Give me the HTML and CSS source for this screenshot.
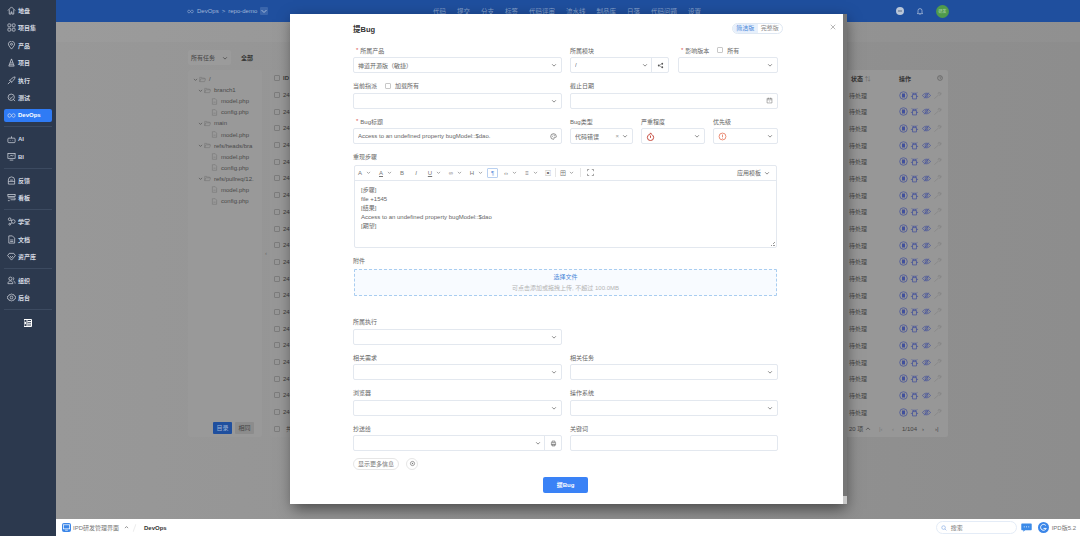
FILE: index.html
```html
<!DOCTYPE html>
<html lang="zh-CN">
<head>
  <meta charset="UTF-8">
  <title>提Bug</title>
  <link rel="stylesheet" href="styles.css">
</head>
<body>
  <svg class="defs" width="0" height="0">
    <symbol id="chev" viewBox="0 0 8 8"><path d="M1.500 3l2.500 2.500L6.500 3" fill="none" stroke="currentColor" stroke-width="1"/></symbol>
    <symbol id="folder" viewBox="0 0 10 10"><path d="M1 8V2h3l1 1h3v1M1 8l1.500-4H9.500L8 8z" fill="none" stroke="currentColor" stroke-width=".7"/></symbol>
    <symbol id="file" viewBox="0 0 10 10"><path d="M2 1h4l2 2v6H2zM3.500 6h3" fill="none" stroke="currentColor" stroke-width=".7"/></symbol>
    <symbol id="run" viewBox="0 0 10 10"><circle cx="5" cy="5" r="4.200" fill="none" stroke="currentColor" stroke-width=".8"/><path d="M3.300 2.800h3.400v4.400H3.300z" fill="currentColor"/></symbol>
    <symbol id="bug" viewBox="0 0 10 10"><path d="M2.800 4h4.400v4.800H2.800zM3.500 4V2.500h3V4M2.800 6H1M9 6H7.200M2 1.500l1.500 1.500M8 1.500L6.500 3" fill="none" stroke="currentColor" stroke-width=".8"/></symbol>
    <symbol id="eye" viewBox="0 0 10 10"><path d="M.5 5C3 1.600 7 1.600 9.500 5 7 8.400 3 8.400.5 5z" fill="none" stroke="currentColor" stroke-width=".8"/><circle cx="5" cy="5" r="1.500" fill="none" stroke="currentColor" stroke-width=".8"/><path d="M2.500 8.200l5-6.400" stroke="currentColor" stroke-width=".7"/></symbol>
    <symbol id="tool" viewBox="0 0 10 10"><path d="M1.500 8.500L6 4.500M5.500 3.500a2 2 0 0 1 2.500-2L6.800 2.800l.8.800L9 2.300a2 2 0 0 1-2.500 2.400" fill="none" stroke="currentColor" stroke-width=".8"/></symbol>
  </svg>

  <div class="app">
    <aside class="sidebar">
      <div class="nav-group">
        <a class="nav-item"><svg viewBox="0 0 10 10"><path d="M1 5l4-4 4 4M2.500 4v5h2V6.500h1V9h2V4"/></svg>地盘</a>
        <a class="nav-item"><svg viewBox="0 0 10 10"><rect x="1" y="1" width="3.200" height="3.200" rx=".8"/><rect x="5.800" y="1" width="3.200" height="3.200" rx=".8"/><rect x="1" y="5.800" width="3.200" height="3.200" rx=".8"/><rect x="5.800" y="5.800" width="3.200" height="3.200" rx=".8"/></svg>项目集</a>
        <a class="nav-item"><svg viewBox="0 0 10 10"><path d="M5 9L2.200 5.400a3.400 3.400 0 1 1 5.600 0z"/><circle cx="5" cy="3.600" r="1.100"/></svg>产品</a>
        <a class="nav-item"><svg viewBox="0 0 10 10"><path d="M5 1L2 9h6zM3.500 5.500h3M2.800 7.500h4.400"/></svg>项目</a>
        <a class="nav-item"><svg viewBox="0 0 10 10"><path d="M1 9l3-3M9 1C6.500 1.300 4.500 3 3.500 5.200l1.300 1.300C7 5.500 8.700 3.500 9 1zM2.500 5l1-.5M5 7.500l.5-1"/></svg>执行</a>
        <a class="nav-item"><svg viewBox="0 0 10 10"><circle cx="4.700" cy="4.700" r="3.500"/><path d="M7.300 7.300L9 9M3 5l1.300 1.200L6.400 3.800"/></svg>测试</a>
        <a class="nav-item active"><svg viewBox="0 0 10 10"><path d="M3 3a2 2 0 1 0 0 4c1.500 0 2.500-4 4-4a2 2 0 1 1 0 4C5.500 7 4.500 3 3 3z"/></svg>DevOps</a>
      </div>
      <div class="nav-group">
        <a class="nav-item"><svg viewBox="0 0 10 10"><rect x="1" y="3.500" width="8" height="5" rx="1"/><path d="M5 3.500V1.500M3.200 6h.6M6.200 6h.6"/></svg>AI</a>
        <a class="nav-item"><svg viewBox="0 0 10 10"><rect x="1" y="1.500" width="8" height="5.500"/><path d="M3 9h4M3 5l1.500-1.500L6 4.500 7.500 3"/></svg>BI</a>
      </div>
      <div class="nav-group">
        <a class="nav-item"><svg viewBox="0 0 10 10"><path d="M1.500 4.500a3.500 3.500 0 0 1 7 0V9h-7zM1.500 6h7M3.500 4.500h3"/></svg>反馈</a>
        <a class="nav-item"><svg viewBox="0 0 10 10"><rect x="1" y="1.500" width="8" height="2.500"/><path d="M1 5.500h8v2H4M1 8.500h2"/></svg>看板</a>
      </div>
      <div class="nav-group">
        <a class="nav-item"><svg viewBox="0 0 10 10"><circle cx="3" cy="2.500" r="1.500"/><circle cx="7" cy="5" r="2"/><circle cx="3" cy="8" r="1"/><path d="M4 3.500l1.300.6M4 7.500l1.500-1"/></svg>学堂</a>
        <a class="nav-item"><svg viewBox="0 0 10 10"><path d="M2 1h4l2.500 2.500V9H2zM3.500 5.500h3.500M3.500 7.200h3.500"/></svg>文档</a>
        <a class="nav-item"><svg viewBox="0 0 10 10"><path d="M2.500 1.500h5L9.300 4 5 9 .7 4zM3.500 4.500L5 6.500l1.500-2"/></svg>资产库</a>
      </div>
      <div class="nav-group">
        <a class="nav-item"><svg viewBox="0 0 10 10"><circle cx="3.800" cy="3" r="1.800"/><path d="M1 8.500c0-4 5.500-4 5.500 0zM6.500 1.300a1.800 1.800 0 0 1 0 3.300M7.300 5.500C8.500 6 9 7 9 8.500"/></svg>组织</a>
        <a class="nav-item"><svg viewBox="0 0 10 10"><path d="M5 .8l1 1.200 1.600-.2.600 1.500 1.500.6-.2 1.100.2 1-1.500.6-.6 1.500L6 8l-1 1.200L4 8l-1.600.2-.6-1.500-1.500-.6.200-1-.2-1.100 1.500-.6.600-1.500L4 2z"/><circle cx="5" cy="5" r="1.500"/></svg>后台</a>
      </div>
      <div class="nav-toggle"><svg viewBox="0 0 8 8"><path d="M0 .5h7.500v7H0zM3 .5v7" fill="none" stroke="#fff"/><path d="M3.500 2h3.500v1H3.500zM3.500 3.800h3.500v1H3.500zM3.500 5.600h3.500v1H3.500zM0 4l2-1.500v3z" fill="#fff"/></svg></div>
    </aside>

    <div class="main">
      <header class="topbar">
        <div class="crumb">
          <svg class="crumb-icon" viewBox="0 0 10 10"><path d="M3 3a2 2 0 1 0 0 4c1.500 0 2.500-4 4-4a2 2 0 1 1 0 4C5.500 7 4.500 3 3 3z"/></svg>
          <span>DevOps</span><span class="crumb-sep">&gt;</span><span>repo-demo</span>
          <span class="crumb-btn"><svg viewBox="0 0 8 8"><use href="#chev"/></svg></span>
        </div>
        <nav class="topnav">
          <a>代码</a><a>提交</a><a>分支</a><a>标签</a><a>代码评审</a><a>流水线</a><a>制品库</a><a>日落</a><a>代码问题</a><a>设置</a>
        </nav>
        <div class="top-actions">
          <svg class="top-plus" viewBox="0 0 8 8"><circle cx="4" cy="4" r="4" fill="#b9c6d8"/><path d="M2 4h4" stroke="#5a6b84"/></svg>
          <svg class="top-bell" viewBox="0 0 10 10"><path d="M2.500 7.500V4.500a2.500 2.500 0 0 1 5 0v3l.8.800H1.700zM4.300 9.200h1.400"/></svg>
          <span class="avatar">研发</span>
        </div>
      </header>
      <div class="subbar"></div>

      <div class="content">
        <div class="filters">
          <span class="filter-select">所有任务<svg viewBox="0 0 8 8"><use href="#chev"/></svg></span>
          <b class="filter-all">全部</b>
        </div>
        <div class="panels">
          <section class="tree-panel">
            <div class="tree-row l0"><svg class="chev" viewBox="0 0 8 8"><use href="#chev"/></svg><svg class="ti" viewBox="0 0 10 10"><use href="#folder"/></svg>/</div>
            <div class="tree-row l1"><svg class="chev" viewBox="0 0 8 8"><use href="#chev"/></svg><svg class="ti" viewBox="0 0 10 10"><use href="#folder"/></svg>branch1</div>
            <div class="tree-row l2"><svg class="ti" viewBox="0 0 10 10"><use href="#file"/></svg>model.php</div>
            <div class="tree-row l2"><svg class="ti" viewBox="0 0 10 10"><use href="#file"/></svg>config.php</div>
            <div class="tree-row l1"><svg class="chev" viewBox="0 0 8 8"><use href="#chev"/></svg><svg class="ti" viewBox="0 0 10 10"><use href="#folder"/></svg>main</div>
            <div class="tree-row l2"><svg class="ti" viewBox="0 0 10 10"><use href="#file"/></svg>model.php</div>
            <div class="tree-row l1"><svg class="chev" viewBox="0 0 8 8"><use href="#chev"/></svg><svg class="ti" viewBox="0 0 10 10"><use href="#folder"/></svg>refs/heads/bra</div>
            <div class="tree-row l2"><svg class="ti" viewBox="0 0 10 10"><use href="#file"/></svg>model.php</div>
            <div class="tree-row l2"><svg class="ti" viewBox="0 0 10 10"><use href="#file"/></svg>config.php</div>
            <div class="tree-row l1"><svg class="chev" viewBox="0 0 8 8"><use href="#chev"/></svg><svg class="ti" viewBox="0 0 10 10"><use href="#folder"/></svg>refs/pullreq/12.</div>
            <div class="tree-row l2"><svg class="ti" viewBox="0 0 10 10"><use href="#file"/></svg>model.php</div>
            <div class="tree-row l2"><svg class="ti" viewBox="0 0 10 10"><use href="#file"/></svg>config.php</div>
            <div class="tree-btns"><span class="btn-dir">目录</span><span class="btn-sub">相同</span></div>
          </section>
          <span class="panel-handle">‹</span>
          <section class="table-panel">
            <div class="t-head"><i class="box"></i><b class="t-id">ID</b><b class="t-status">状态 <span class="sort">⇅</span></b><b class="t-ops">操作</b><svg class="t-help" viewBox="0 0 10 10"><circle cx="5" cy="5" r="4" fill="none" stroke="currentColor"/><path d="M3.500 4a1.500 1.500 0 1 1 1.500 2v.6" fill="none" stroke="currentColor" stroke-width=".8"/></svg></div>
            <div class="t-row"><i class="box"></i><span class="t-id">2487</span><span class="t-status">待处理</span><span class="t-acts"><svg viewBox="0 0 10 10"><use href="#run"/></svg><svg viewBox="0 0 10 10"><use href="#bug"/></svg><svg viewBox="0 0 10 10"><use href="#eye"/></svg><svg class="off" viewBox="0 0 10 10"><use href="#tool"/></svg></span></div>
            <div class="t-row"><i class="box"></i><span class="t-id">2486</span><span class="t-status">待处理</span><span class="t-acts"><svg viewBox="0 0 10 10"><use href="#run"/></svg><svg viewBox="0 0 10 10"><use href="#bug"/></svg><svg viewBox="0 0 10 10"><use href="#eye"/></svg><svg class="off" viewBox="0 0 10 10"><use href="#tool"/></svg></span></div>
            <div class="t-row"><i class="box"></i><span class="t-id">2485</span><span class="t-status">待处理</span><span class="t-acts"><svg viewBox="0 0 10 10"><use href="#run"/></svg><svg viewBox="0 0 10 10"><use href="#bug"/></svg><svg viewBox="0 0 10 10"><use href="#eye"/></svg><svg class="off" viewBox="0 0 10 10"><use href="#tool"/></svg></span></div>
            <div class="t-row"><i class="box"></i><span class="t-id">2484</span><span class="t-status">待处理</span><span class="t-acts"><svg viewBox="0 0 10 10"><use href="#run"/></svg><svg viewBox="0 0 10 10"><use href="#bug"/></svg><svg viewBox="0 0 10 10"><use href="#eye"/></svg><svg class="off" viewBox="0 0 10 10"><use href="#tool"/></svg></span></div>
            <div class="t-row"><i class="box"></i><span class="t-id">2483</span><span class="t-status">待处理</span><span class="t-acts"><svg viewBox="0 0 10 10"><use href="#run"/></svg><svg viewBox="0 0 10 10"><use href="#bug"/></svg><svg viewBox="0 0 10 10"><use href="#eye"/></svg><svg class="off" viewBox="0 0 10 10"><use href="#tool"/></svg></span></div>
            <div class="t-row"><i class="box"></i><span class="t-id">2482</span><span class="t-status">待处理</span><span class="t-acts"><svg viewBox="0 0 10 10"><use href="#run"/></svg><svg viewBox="0 0 10 10"><use href="#bug"/></svg><svg viewBox="0 0 10 10"><use href="#eye"/></svg><svg class="off" viewBox="0 0 10 10"><use href="#tool"/></svg></span></div>
            <div class="t-row"><i class="box"></i><span class="t-id">2481</span><span class="t-status">待处理</span><span class="t-acts"><svg viewBox="0 0 10 10"><use href="#run"/></svg><svg viewBox="0 0 10 10"><use href="#bug"/></svg><svg viewBox="0 0 10 10"><use href="#eye"/></svg><svg class="off" viewBox="0 0 10 10"><use href="#tool"/></svg></span></div>
            <div class="t-row"><i class="box"></i><span class="t-id">2480</span><span class="t-status">待处理</span><span class="t-acts"><svg viewBox="0 0 10 10"><use href="#run"/></svg><svg viewBox="0 0 10 10"><use href="#bug"/></svg><svg viewBox="0 0 10 10"><use href="#eye"/></svg><svg class="off" viewBox="0 0 10 10"><use href="#tool"/></svg></span></div>
            <div class="t-row"><i class="box"></i><span class="t-id">2479</span><span class="t-status">待处理</span><span class="t-acts"><svg viewBox="0 0 10 10"><use href="#run"/></svg><svg viewBox="0 0 10 10"><use href="#bug"/></svg><svg viewBox="0 0 10 10"><use href="#eye"/></svg><svg class="off" viewBox="0 0 10 10"><use href="#tool"/></svg></span></div>
            <div class="t-row"><i class="box"></i><span class="t-id">2478</span><span class="t-status">待处理</span><span class="t-acts"><svg viewBox="0 0 10 10"><use href="#run"/></svg><svg viewBox="0 0 10 10"><use href="#bug"/></svg><svg viewBox="0 0 10 10"><use href="#eye"/></svg><svg class="off" viewBox="0 0 10 10"><use href="#tool"/></svg></span></div>
            <div class="t-row"><i class="box"></i><span class="t-id">2477</span><span class="t-status">待处理</span><span class="t-acts"><svg viewBox="0 0 10 10"><use href="#run"/></svg><svg viewBox="0 0 10 10"><use href="#bug"/></svg><svg viewBox="0 0 10 10"><use href="#eye"/></svg><svg class="off" viewBox="0 0 10 10"><use href="#tool"/></svg></span></div>
            <div class="t-row"><i class="box"></i><span class="t-id">2476</span><span class="t-status">待处理</span><span class="t-acts"><svg viewBox="0 0 10 10"><use href="#run"/></svg><svg viewBox="0 0 10 10"><use href="#bug"/></svg><svg viewBox="0 0 10 10"><use href="#eye"/></svg><svg class="off" viewBox="0 0 10 10"><use href="#tool"/></svg></span></div>
            <div class="t-row"><i class="box"></i><span class="t-id">2475</span><span class="t-status">待处理</span><span class="t-acts"><svg viewBox="0 0 10 10"><use href="#run"/></svg><svg viewBox="0 0 10 10"><use href="#bug"/></svg><svg viewBox="0 0 10 10"><use href="#eye"/></svg><svg class="off" viewBox="0 0 10 10"><use href="#tool"/></svg></span></div>
            <div class="t-row"><i class="box"></i><span class="t-id">2474</span><span class="t-status">待处理</span><span class="t-acts"><svg viewBox="0 0 10 10"><use href="#run"/></svg><svg viewBox="0 0 10 10"><use href="#bug"/></svg><svg viewBox="0 0 10 10"><use href="#eye"/></svg><svg class="off" viewBox="0 0 10 10"><use href="#tool"/></svg></span></div>
            <div class="t-row"><i class="box"></i><span class="t-id">2473</span><span class="t-status">待处理</span><span class="t-acts"><svg viewBox="0 0 10 10"><use href="#run"/></svg><svg viewBox="0 0 10 10"><use href="#bug"/></svg><svg viewBox="0 0 10 10"><use href="#eye"/></svg><svg class="off" viewBox="0 0 10 10"><use href="#tool"/></svg></span></div>
            <div class="t-row"><i class="box"></i><span class="t-id">2472</span><span class="t-status">待处理</span><span class="t-acts"><svg viewBox="0 0 10 10"><use href="#run"/></svg><svg viewBox="0 0 10 10"><use href="#bug"/></svg><svg viewBox="0 0 10 10"><use href="#eye"/></svg><svg class="off" viewBox="0 0 10 10"><use href="#tool"/></svg></span></div>
            <div class="t-row"><i class="box"></i><span class="t-id">2471</span><span class="t-status">待处理</span><span class="t-acts"><svg viewBox="0 0 10 10"><use href="#run"/></svg><svg viewBox="0 0 10 10"><use href="#bug"/></svg><svg viewBox="0 0 10 10"><use href="#eye"/></svg><svg class="off" viewBox="0 0 10 10"><use href="#tool"/></svg></span></div>
            <div class="t-row"><i class="box"></i><span class="t-id">2470</span><span class="t-status">待处理</span><span class="t-acts"><svg viewBox="0 0 10 10"><use href="#run"/></svg><svg viewBox="0 0 10 10"><use href="#bug"/></svg><svg viewBox="0 0 10 10"><use href="#eye"/></svg><svg class="off" viewBox="0 0 10 10"><use href="#tool"/></svg></span></div>
            <div class="t-row"><i class="box"></i><span class="t-id">2469</span><span class="t-status">待处理</span><span class="t-acts"><svg viewBox="0 0 10 10"><use href="#run"/></svg><svg viewBox="0 0 10 10"><use href="#bug"/></svg><svg viewBox="0 0 10 10"><use href="#eye"/></svg><svg class="off" viewBox="0 0 10 10"><use href="#tool"/></svg></span></div>
            <div class="t-row"><i class="box"></i><span class="t-id">2468</span><span class="t-status">待处理</span><span class="t-acts"><svg viewBox="0 0 10 10"><use href="#run"/></svg><svg viewBox="0 0 10 10"><use href="#bug"/></svg><svg viewBox="0 0 10 10"><use href="#eye"/></svg><svg class="off" viewBox="0 0 10 10"><use href="#tool"/></svg></span></div>
            <div class="t-foot"><i class="box"></i><span class="t-id">共</span><span class="pager"><span>20 项</span><svg viewBox="0 0 8 8"><path d="M1.500 5L4 2.500 6.500 5" fill="none" stroke="currentColor"/></svg><span class="dim">|‹</span><span class="dim">‹</span><span>1/104</span><span>›</span><span>›|</span></span></div>
          </section>
        </div>
      </div>

      <footer class="taskbar">
        <span class="app-icon"><svg viewBox="0 0 10 10"><rect x="1.500" y="2" width="7" height="4.500" fill="none" stroke="#fff" stroke-width=".8"/><path d="M3.500 8h3" stroke="#fff" stroke-width=".8"/></svg></span>
        <span class="app-name">IPD研发管理界面</span>
        <svg class="app-chev" viewBox="0 0 8 8"><path d="M1.500 5L4 2.500 6.500 5" fill="none" stroke="currentColor"/></svg>
        <span class="app-sep"></span>
        <b class="app-page">DevOps</b>
        <span class="search"><svg viewBox="0 0 10 10"><circle cx="4.300" cy="4.300" r="3" fill="none" stroke="#7ea4e0"/><path d="M6.500 6.500L9 9" stroke="#7ea4e0"/></svg>搜索</span>
        <svg class="chat" viewBox="0 0 12 10"><path d="M1 .5h10a.8.8 0 0 1 .8.8v6a.8.8 0 0 1-.8.8H4.500L2.500 9.800V8.100H1a.8.8 0 0 1-.8-.8v-6A.8.8 0 0 1 1 .5z" fill="#3c8be8"/><path d="M3 4.300h1M5.500 4.300h1M8 4.300h1" stroke="#fff"/></svg>
        <svg class="logo" viewBox="0 0 12 12"><circle cx="6" cy="6" r="6" fill="#3b86e8"/><path d="M8.500 3.800A3.200 3.200 0 1 0 9 7H6" fill="none" stroke="#fff"/></svg>
        <span class="version">IPD版5.2</span>
      </footer>
    </div>
  </div>

  <div class="modal">
    <div class="modal-head">
      <h2>提Bug</h2>
      <div class="seg"><span class="seg-on">简洁版</span><span>完整版</span></div>
      <svg class="close" viewBox="0 0 8 8"><path d="M1 1l6 6M7 1L1 7" stroke="#888" stroke-width=".8"/></svg>
    </div>
    <form class="form">
      <div class="row cols">
        <div class="field">
          <label class="req">所属产品</label>
          <div class="ctl"><span>禅道开源版（敏捷）</span><svg viewBox="0 0 8 8"><use href="#chev"/></svg></div>
        </div>
        <div class="cols split">
          <div class="field">
            <label>所属模块</label>
            <div class="ctl with-btn"><span>/</span><svg viewBox="0 0 8 8"><use href="#chev"/></svg><i class="addon"><svg viewBox="0 0 10 10"><circle cx="2.500" cy="5" r="1.300"/><circle cx="7.500" cy="2.500" r="1.300"/><circle cx="7.500" cy="7.500" r="1.300"/><path d="M3.500 4.500l3-1.500M3.500 5.500l3 1.500" fill="none" stroke="#555" stroke-width=".7"/></svg></i></div>
          </div>
          <div class="field">
            <label class="req">影响版本<i class="box"></i>所有</label>
            <div class="ctl"><span></span><svg viewBox="0 0 8 8"><use href="#chev"/></svg></div>
          </div>
        </div>
      </div>
      <div class="row cols">
        <div class="field">
          <label>当前指派<i class="box"></i>加载所有</label>
          <div class="ctl"><span></span><svg viewBox="0 0 8 8"><use href="#chev"/></svg></div>
        </div>
        <div class="field">
          <label>截止日期</label>
          <div class="ctl"><span></span><svg class="cal" viewBox="0 0 10 10"><path d="M1.500 2h7v6.500h-7zM1.500 4h7M3.500 1v2M6.500 1v2M4.500 6h1" fill="none" stroke="currentColor" stroke-width=".7"/></svg></div>
        </div>
      </div>
      <div class="row cols">
        <div class="field">
          <label class="req">Bug标题</label>
          <div class="ctl"><span class="val">Access to an undefined property bugModel::$dao.</span><svg class="palette" viewBox="0 0 10 10"><path d="M5 1a4 4 0 1 0 0 8c1 0 1-1 .6-1.500-.4-.7 0-1.300.8-1.300H8A1 1 0 0 0 9 5a4 4 0 0 0-4-4z" fill="none" stroke="#666"/><circle cx="3.200" cy="5" r=".7" fill="#666"/><circle cx="4.400" cy="3" r=".7" fill="#666"/><circle cx="6.600" cy="3.300" r=".7" fill="#666"/></svg></div>
        </div>
        <div class="cols triple">
          <div class="field">
            <label>Bug类型</label>
            <div class="ctl"><span>代码错误</span><em class="clear">×</em><svg viewBox="0 0 8 8"><use href="#chev"/></svg></div>
          </div>
          <div class="field">
            <label>严重程度</label>
            <div class="ctl"><svg class="sev" viewBox="0 0 10 10"><path d="M5 1c.5 1.500 3.500 2.500 3.500 5A3.500 3.500 0 0 1 1.500 6C1.500 4.500 2.500 4 3 3c.5.500 1 .5 2-2z" fill="none" stroke="#c0392b" stroke-width="1"/><path d="M5 4v2.500" stroke="#c0392b"/></svg><span></span><svg viewBox="0 0 8 8"><use href="#chev"/></svg></div>
          </div>
          <div class="field">
            <label>优先级</label>
            <div class="ctl"><svg class="sev" viewBox="0 0 10 10"><circle cx="5" cy="5" r="3.800" fill="none" stroke="#e8826a"/><path d="M5 2.800v3M5 6.600v.8" stroke="#e8826a"/></svg><span></span><svg viewBox="0 0 8 8"><use href="#chev"/></svg></div>
          </div>
        </div>
      </div>

      <div class="block">
        <label>重现步骤</label>
        <div class="editor">
          <div class="toolbar">
            <span class="tool"><b>A</b><svg viewBox="0 0 8 8"><use href="#chev"/></svg></span>
            <span class="tool"><b class="under">A</b><svg viewBox="0 0 8 8"><use href="#chev"/></svg></span>
            <span class="tool"><b>B</b></span>
            <span class="tool"><b class="ital">I</b></span>
            <span class="tool"><b class="under">U</b><svg viewBox="0 0 8 8"><use href="#chev"/></svg></span>
            <span class="tool"><b>∞</b><svg viewBox="0 0 8 8"><use href="#chev"/></svg></span>
            <span class="tool"><b>H</b><svg viewBox="0 0 8 8"><use href="#chev"/></svg></span>
            <span class="tool tool-on"><b>¶</b></span>
            <span class="tool"><b>‹›</b><svg viewBox="0 0 8 8"><use href="#chev"/></svg></span>
            <span class="tool"><b>≡</b><svg viewBox="0 0 8 8"><use href="#chev"/></svg></span>
            <span class="tool"><b>▣</b></span>
            <i class="tool-sep tight"></i>
            <span class="tool"><b>田</b><svg viewBox="0 0 8 8"><use href="#chev"/></svg></span>
            <i class="tool-sep"></i>
            <span class="tool"><svg class="full" viewBox="0 0 8 8"><path d="M.5 2.500v-2h2M5.500.5h2v2M7.500 5.500v2h-2M2.500 7.500h-2v-2" fill="none" stroke="currentColor" stroke-width=".8"/></svg></span>
            <span class="tpl">应用模板<svg viewBox="0 0 8 8"><use href="#chev"/></svg></span>
          </div>
          <div class="editor-body">
            <p>[步骤]</p>
            <p>file +1545</p>
            <p>[结果]</p>
            <p>Access to an undefined property bugModel::$dao</p>
            <p>[期望]</p>
          </div>
        </div>
      </div>

      <div class="block attach">
        <label>附件</label>
        <div class="upload">
          <span class="up-link">选择文件</span>
          <span class="up-hint">可点击添加或拖拽上传, 不超过 100.0MB</span>
        </div>
      </div>

      <div class="row cols exec">
        <div class="field">
          <label>所属执行</label>
          <div class="ctl"><span></span><svg viewBox="0 0 8 8"><use href="#chev"/></svg></div>
        </div>
      </div>
      <div class="row cols">
        <div class="field">
          <label>相关需求</label>
          <div class="ctl"><span></span><svg viewBox="0 0 8 8"><use href="#chev"/></svg></div>
        </div>
        <div class="field">
          <label>相关任务</label>
          <div class="ctl"><span></span><svg viewBox="0 0 8 8"><use href="#chev"/></svg></div>
        </div>
      </div>
      <div class="row cols">
        <div class="field">
          <label>浏览器</label>
          <div class="ctl"><span></span><svg viewBox="0 0 8 8"><use href="#chev"/></svg></div>
        </div>
        <div class="field">
          <label>操作系统</label>
          <div class="ctl"><span></span><svg viewBox="0 0 8 8"><use href="#chev"/></svg></div>
        </div>
      </div>
      <div class="row cols">
        <div class="field">
          <label>抄送给</label>
          <div class="ctl with-btn wide-btn"><span></span><svg viewBox="0 0 8 8"><use href="#chev"/></svg><i class="addon"><svg viewBox="0 0 10 10"><path d="M3 3V1.500h4V3M2 3.500h6v3.500H2zM3 6h4v2.500H3z" fill="none" stroke="#555" stroke-width=".8"/></svg></i></div>
        </div>
        <div class="field">
          <label>关键词</label>
          <div class="ctl"></div>
        </div>
      </div>

      <div class="more">
        <span class="more-pill">显示更多信息</span>
        <span class="more-gear"><svg viewBox="0 0 10 10"><circle cx="5" cy="5" r="3" fill="none" stroke="#777" stroke-width="1"/><circle cx="5" cy="5" r="1" fill="#777"/></svg></span>
      </div>
      <div class="submit-row"><button type="button">提Bug</button></div>
    </form>
  </div>
</body>
</html>
```

FILE: styles.css
```css
* {
  box-sizing: border-box;
}
html, body {
  margin: 0;
  height: 100%;
  overflow: hidden;
}
body {
  font-family: "Liberation Sans", "Noto Sans CJK SC", sans-serif;
  font-size: 6px;
  color: #444;
  background: #959595;
}
.defs {
  position: absolute;
}
.app {
  display: flex;
  height: 536px;
}

/* sidebar */
.sidebar {
  width: 56px;
  flex: none;
  background: #2c394e;
  color: #d5dae2;
  padding-top: 1.500px;
}
.nav-group {
  padding: 3px 0 2.300px;
  margin: 0 4px;
  border-bottom: 1px solid #3c4a60;
}
.nav-group:first-child {
  padding-top: 0;
}
.nav-item {
  display: flex;
  align-items: center;
  height: 17.5px;
  padding-left: 2.500px;
  gap: 2.500px;
  font-weight: bold;
  border-radius: 2px;
}
.nav-item svg {
  width: 9px;
  height: 9px;
  fill: none;
  stroke: #dfe3ea;
  stroke-width: .75;
}
.nav-item.active {
  background: #2f7bf5;
  color: #fff;
  height: 13.5px;
  margin: 2px 0;
}
.nav-toggle {
  display: flex;
  justify-content: center;
  padding-top: 9.500px;
}
.nav-toggle svg {
  width: 8px;
  height: 8px;
}

/* top area */
.main {
  flex: 1;
  display: flex;
  flex-direction: column;
  min-width: 0;
  background: linear-gradient(to right, #989898, #8d8d8d);
}
.topbar {
  display: flex;
  align-items: center;
  height: 22px;
  flex: none;
  background: #1f4f9e;
  color: #9fb6d8;
  padding-left: 131px;
}
.crumb {
  display: flex;
  align-items: center;
  gap: 3px;
  width: 246px;
}
.crumb-icon {
  width: 7px;
  height: 7px;
  fill: none;
  stroke: #9fb6d8;
  stroke-width: .8;
}
.crumb-btn {
  display: flex;
  width: 8px;
  height: 8px;
  background: #3a65ab;
  border-radius: 1px;
}
.topnav {
  display: flex;
  gap: 11px;
  font-size: 6.500px;
}
.topnav a {
  color: #8aa4cc;
}
.top-actions {
  display: flex;
  align-items: center;
  margin-left: auto;
  margin-right: 131px;
  gap: 12px;
}
.top-plus {
  width: 8px;
  height: 8px;
}
.top-bell {
  width: 8px;
  height: 8px;
  fill: none;
  stroke: #c6d2e4;
  stroke-width: .8;
}
.avatar {
  width: 13px;
  height: 13px;
  border-radius: 50%;
  background: #4f9a4c;
  color: #b9dcb6;
  font-size: 4px;
  line-height: 13px;
  text-align: center;
}
.subbar {
  height: 20px;
  flex: none;
  background: rgba(255, 255, 255, .03);
}

/* page under the dialog */
.content {
  flex: 1;
  padding: 8px 0 0 132px;
  width: 892px;
}
.filters {
  display: flex;
  align-items: center;
  height: 15px;
  gap: 10px;
}
.filter-select {
  display: flex;
  align-items: center;
  justify-content: space-between;
  width: 43px;
  height: 15px;
  padding: 0 3px;
  background: #9b9b9b;
  border-radius: 2px;
}
.filter-select svg {
  width: 6px;
  height: 6px;
}
.filter-all {
  color: #333;
}
.panels {
  display: flex;
  position: relative;
  margin-top: 5px;
  gap: 8px;
  width: 760px;
}
.tree-panel {
  position: relative;
  width: 74px;
  height: 367px;
  padding-top: 3.500px;
  background: #999;
  border-radius: 2px;
}
.tree-row {
  display: flex;
  align-items: center;
  height: 11.1px;
  white-space: nowrap;
  overflow: hidden;
  color: #4a4a4a;
}
.tree-row .chev {
  width: 5px;
  height: 5px;
  margin-right: 1px;
}
.tree-row .ti {
  width: 7px;
  height: 7px;
  margin-right: 3px;
  color: #6f6f6f;
}
.l0 { padding-left: 5px; }
.l1 { padding-left: 10px; }
.l2 { padding-left: 23px; }
.tree-btns {
  position: absolute;
  right: 8px;
  bottom: 3px;
  display: flex;
  gap: 3px;
}
.tree-btns span {
  width: 19px;
  height: 12px;
  line-height: 12px;
  text-align: center;
  border-radius: 1px;
}
.btn-dir {
  background: #1f4f9e;
  color: #9fb6d8;
}
.btn-sub {
  background: #8c8c8c;
}
.panel-handle {
  position: absolute;
  left: 75px;
  top: 176px;
  width: 6px;
  height: 14px;
  line-height: 14px;
  text-align: center;
  color: #666;
}
.table-panel {
  width: 678px;
  padding-top: 0;
  background: #979797;
  border-radius: 2px;
}
.t-head, .t-row, .t-foot {
  display: flex;
  align-items: center;
  height: 16.7px;
  padding-left: 4px;
}
.box {
  display: inline-block;
  width: 6px;
  height: 6px;
  flex: none;
  border: 1px solid #7c7c7c;
  border-radius: 1px;
}
.t-id {
  margin-left: 3px;
  color: #3a3a3a;
}
.t-status {
  margin-left: auto;
  width: 47px;
  color: #444;
}
.t-head .t-status {
  padding-left: 2px;
  color: #333;
}
.sort {
  color: #666;
  font-weight: normal;
}
.t-ops {
  width: 41px;
  padding-left: 3px;
  color: #333;
}
.t-help {
  width: 6px;
  height: 6px;
  margin-right: 5px;
  color: #555;
}
.t-acts {
  display: flex;
  gap: 2.300px;
  width: 52px;
  padding-left: 3px;
  color: #41509c;
}
.t-acts svg {
  width: 9px;
  height: 9px;
}
.t-acts .off {
  color: #858585;
}
.t-foot .t-id {
  margin-left: 6px;
}
.pager {
  display: grid;
  grid-template-columns: 16px 14px 13px 10px 20px 13px 8px;
  align-items: center;
  margin-left: auto;
  margin-right: 5px;
  color: #444;
}
.pager svg {
  width: 6px;
  height: 6px;
}
.pager .dim {
  color: #777;
}

/* bottom bar */
.taskbar {
  display: flex;
  align-items: center;
  height: 17px;
  flex: none;
  background: #fff;
  padding: 0 4px 0 6px;
  color: #555;
  position: relative;
  z-index: 3;
}
.app-icon {
  display: flex;
  width: 9px;
  height: 9px;
  margin-right: 2px;
  background: #3b86e8;
  border-radius: 2px;
}
.app-name {
  color: #777;
}
.app-chev {
  width: 5px;
  height: 5px;
  margin-left: 5px;
  color: #555;
}
.app-sep {
  width: 1px;
  height: 8px;
  margin: 0 9px 0 5px;
  background: #eee;
  transform: rotate(20deg);
}
.app-page {
  color: #333;
}
.search {
  display: flex;
  align-items: center;
  gap: 4px;
  width: 81px;
  height: 13px;
  margin-left: auto;
  padding-left: 4px;
  border: 1px solid #e4ecf7;
  border-radius: 7px;
  color: #777;
}
.search svg {
  width: 6px;
  height: 6px;
}
.chat {
  width: 11px;
  height: 9px;
  margin-left: 4px;
}
.logo {
  width: 11px;
  height: 11px;
  margin-left: 6px;
}
.version {
  margin-left: 3px;
  color: #777;
}

/* dialog */
.modal {
  position: absolute;
  left: 290px;
  top: 14px;
  width: 553px;
  height: 490px;
  background: #fff;
  box-shadow: 3px 5px 14px rgba(0, 0, 0, .5);
  padding: 0 65px 0 63px;
}
.modal::after {
  content: "";
  position: absolute;
  left: 100%;
  top: 0;
  bottom: 0;
  width: 4px;
  background: linear-gradient(to bottom, #767676 0, #767676 482px, #c8c8c8 482px);
}
.modal-head {
  display: flex;
  align-items: center;
  height: 28px;
  padding-top: 1px;
}
.modal-head h2 {
  margin: 0;
  font-size: 7.5px;
  font-weight: bold;
  color: #333;
}
.seg {
  display: flex;
  height: 11px;
  margin-left: auto;
  margin-right: -5px;
  border: 1px solid #dfe8f3;
  border-radius: 6px;
  line-height: 9px;
  color: #8a8a8a;
  overflow: hidden;
}
.seg span {
  width: 24.500px;
  text-align: center;
}
.seg .seg-on {
  background: #e7f0fc;
  color: #4a86d8;
}
.close {
  position: absolute;
  right: 7px;
  top: 10px;
  width: 6px;
  height: 6px;
}
.form {
  display: flex;
  flex-direction: column;
  padding-top: 4px;
}
.row {
  margin-bottom: 8.5px;
}
.cols {
  display: grid;
  grid-template-columns: 209px 208px;
  column-gap: 8px;
}
.split {
  grid-template-columns: 99px 100px;
  column-gap: 9px;
}
.triple {
  grid-template-columns: 63px 64px 65px;
  column-gap: 8px;
}
.field label, .block label {
  display: flex;
  align-items: center;
  height: 8px;
  margin-bottom: 3px;
  color: #666;
  white-space: nowrap;
}
.req::before {
  content: "*";
  margin: 0 2px 0 3px;
  color: #d9534f;
}
label .box {
  margin: 0 4px 0 8px;
  border-color: #c8c8c8;
}
.ctl {
  position: relative;
  display: flex;
  align-items: center;
  height: 16px;
  padding: 0 4px;
  border: 1px solid #e3e8ef;
  border-radius: 2px;
  color: #666;
}
.ctl span {
  flex: 1;
  white-space: nowrap;
  overflow: hidden;
}
.ctl > svg {
  width: 6px;
  height: 6px;
  flex: none;
  color: #666;
}
.ctl > .cal, .ctl > .palette, .ctl > .sev {
  width: 7px;
  height: 7px;
}
.ctl > .sev {
  width: 9px;
  height: 9px;
}
.clear {
  margin-right: 3px;
  font-style: normal;
  color: #999;
}
.with-btn {
  padding-right: 0;
}
.addon {
  display: flex;
  align-items: center;
  justify-content: center;
  width: 17px;
  height: 100%;
  margin-left: 3px;
  border-left: 1px solid #e3e8ef;
}
.addon svg {
  width: 7px;
  height: 7px;
  fill: #555;
}
.wide-btn .addon svg {
  fill: none;
}
.block {
  margin-bottom: 9px;
}
.block > label {
  height: 8px;
  margin-bottom: 4px;
}
.editor {
  width: 423px;
  height: 83px;
  margin-left: 1px;
  border: 1px solid #e3e8ef;
  border-radius: 2px;
  position: relative;
}
.editor::after {
  content: "";
  position: absolute;
  right: 1px;
  bottom: 1px;
  width: 4px;
  height: 4px;
  background: linear-gradient(135deg, transparent 50%, #999 50%, #999 60%, transparent 60%, transparent 75%, #999 75%);
}
.toolbar {
  display: flex;
  align-items: center;
  gap: 6px;
  height: 15px;
  padding-left: 1px;
  border-bottom: 1px solid #e3e8ef;
  color: #777;
}
.tool {
  display: flex;
  align-items: center;
  gap: 2px;
}
.tool b {
  width: 8px;
  font-weight: normal;
  text-align: center;
}
.tool svg {
  width: 5px;
  height: 5px;
}
.tool .full {
  width: 7px;
  height: 7px;
}
.under {
  text-decoration: underline;
}
.ital {
  font-style: italic;
}
.tool-on {
  margin: 0 -2px;
  padding: 1px .5px;
  border: 1px solid #b9d0f0;
  border-radius: 1px;
  color: #5a8fd8;
}
.tool-sep {
  width: 1px;
  height: 9px;
  background: #e6e6e6;
}
.tool-sep.tight {
  margin: 0 -3px;
}
.tpl {
  display: flex;
  align-items: center;
  gap: 3px;
  margin-left: auto;
  margin-right: 6px;
  color: #666;
}
.tpl svg {
  width: 6px;
  height: 6px;
}
.editor-body {
  padding: 5px 6px;
  color: #666;
}
.editor-body p {
  margin: 0;
  line-height: 9px;
}
.upload {
  display: flex;
  flex-direction: column;
  align-items: center;
  justify-content: center;
  gap: 2px;
  width: 423px;
  height: 27px;
  margin-left: 1px;
  background: #f8fbff;
  border: 1px dashed #a9cdf0;
  border-radius: 1px;
}
.up-link {
  color: #4a86d8;
}
.up-hint {
  color: #b4b4b4;
}
.exec {
  margin-top: 13px;
}
.more {
  display: flex;
  align-items: center;
  gap: 7px;
  margin-top: -2px;
}
.more-pill {
  height: 12px;
  padding: 0 4px;
  line-height: 11px;
  border: 1px solid #e6e6e6;
  border-radius: 6px;
  color: #777;
}
.more-gear {
  display: flex;
  align-items: center;
  justify-content: center;
  width: 12px;
  height: 12px;
  border: 1px solid #e6e6e6;
  border-radius: 50%;
}
.more-gear svg {
  width: 7px;
  height: 7px;
}
.submit-row {
  display: flex;
  justify-content: center;
  margin-top: 7px;
}
.submit-row button {
  width: 45px;
  height: 16px;
  padding: 0;
  border: none;
  border-radius: 2px;
  background: #3a82f6;
  color: #fff;
  font: inherit;
  font-weight: bold;
}
```
